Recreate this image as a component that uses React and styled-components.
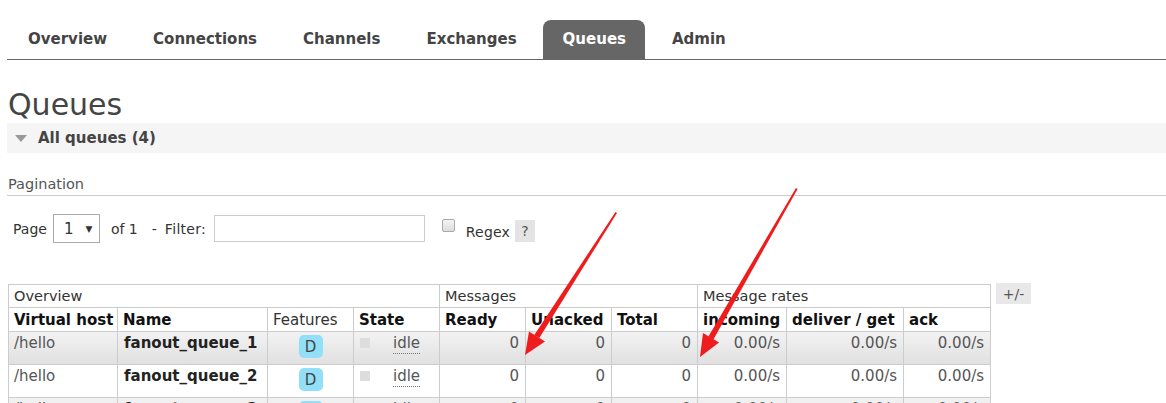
import React from "react";
import styled, { createGlobalStyle } from "styled-components";

const GlobalStyle = createGlobalStyle`
  html, body {
    margin: 0;
    padding: 0;
    background: #fff;
  }
  body {
    font-family: "DejaVu Sans", Verdana, sans-serif;
    color: #444;
    width: 1166px;
    overflow: hidden;
  }
`;

const tabs = ["Overview", "Connections", "Channels", "Exchanges", "Queues", "Admin"];

const columns = [
  { label: "Virtual host", width: 109 },
  { label: "Name", width: 150 },
  { label: "Features", width: 86, light: true },
  { label: "State", width: 86 },
  { label: "Ready", width: 86 },
  { label: "Unacked", width: 86 },
  { label: "Total", width: 86 },
  { label: "incoming", width: 89 },
  { label: "deliver / get", width: 117 },
  { label: "ack", width: 87 },
];

const queues = [
  { vhost: "/hello", name: "fanout_queue_1" },
  { vhost: "/hello", name: "fanout_queue_2" },
  { vhost: "/hello", name: "fanout_queue_3" },
];

const App = () => {
  return (
    <Page>
      <GlobalStyle />
      <TabBar>
        {tabs.map((t) => (
          <Tab key={t} active={t === "Queues"}>
            {t}
          </Tab>
        ))}
      </TabBar>

      <Main>
        <Title>Queues</Title>
        <SectionHeader>
          <Triangle />
          All queues (4)
        </SectionHeader>

        <SubHeading>Pagination</SubHeading>
        <FilterRow>
          <Label>Page</Label>
          <SelectBox>
            1<SelectArrow>▼</SelectArrow>
          </SelectBox>
          <OfLabel>of 1</OfLabel>
          <FilterLabel>- Filter:</FilterLabel>
          <FilterInput />
          <Checkbox type="checkbox" />
          <RegexLabel>Regex</RegexLabel>
          <Help>?</Help>
        </FilterRow>

        <TableArea>
          <QueueTable>
            <colgroup>
              {columns.map((c) => (
                <col key={c.label} style={{ width: c.width }} />
              ))}
            </colgroup>
            <thead>
              <tr>
                <GroupCell colSpan={4}>Overview</GroupCell>
                <GroupCell colSpan={3}>Messages</GroupCell>
                <GroupCell colSpan={3}>Message rates</GroupCell>
              </tr>
              <tr>
                {columns.map((c) => (
                  <HeadCell key={c.label} light={c.light}>
                    {c.label}
                  </HeadCell>
                ))}
              </tr>
            </thead>
            <tbody>
              {queues.map((q, i) => (
                <Row key={q.name} alt={i % 2 === 0}>
                  <Cell>{q.vhost}</Cell>
                  <NameCell>{q.name}</NameCell>
                  <Cell center>
                    <Badge>D</Badge>
                  </Cell>
                  <Cell>
                    <StateBox />
                    <Idle>idle</Idle>
                  </Cell>
                  <Cell num>0</Cell>
                  <Cell num>0</Cell>
                  <Cell num>0</Cell>
                  <Cell num>0.00/s</Cell>
                  <Cell num>0.00/s</Cell>
                  <Cell num>0.00/s</Cell>
                </Row>
              ))}
            </tbody>
          </QueueTable>
          <ToggleButton>+/-</ToggleButton>
        </TableArea>
      </Main>

      <Annotations width="1166" height="403" viewBox="0 0 1166 403">
        <polygon points="615.5,212 617,213 539.3,338 534.3,335" fill="#ee1c1c" />
        <polygon points="525,355 529,331.5 545,341.5" fill="#ee1c1c" />
        <polygon points="796,188 797.6,189 713.4,339.4 708.4,336.4" fill="#ee1c1c" />
        <polygon points="700,357 703,333 719,342.5" fill="#ee1c1c" />
      </Annotations>
    </Page>
  );
};

export default App;

const Page = styled.div`
  position: relative;
  height: 403px;
  overflow: hidden;
`;

const TabBar = styled.ul`
  display: flex;
  list-style: none;
  margin: 0 0 0 7px;
  padding: 20px 0 0 1px;
  border-bottom: 1px solid #666;
`;

const Tab = styled.li`
  font-weight: bold;
  font-size: 15px;
  line-height: 19px;
  padding: 10px 19px 10px 20px;
  margin-right: 7px;
  color: ${(p) => (p.active ? "#fff" : "#444")};
  background: ${(p) => (p.active ? "#666" : "transparent")};
  border-radius: 8px 8px 0 0;
`;

const Main = styled.div`
  padding: 0 0 0 7px;
`;

const Title = styled.h1`
  margin: 27px 0 0 1px;
  font-size: 30px;
  line-height: 36px;
  font-weight: normal;
  color: #444;
`;

const SectionHeader = styled.h2`
  display: flex;
  align-items: center;
  margin: 0;
  height: 30px;
  background: #f5f5f5;
  font-size: 15px;
  font-weight: bold;
  color: #444;
`;

const Triangle = styled.span`
  width: 0;
  height: 0;
  margin: 1px 11px 0 8px;
  border-left: 6px solid transparent;
  border-right: 6px solid transparent;
  border-top: 7px solid #999;
`;

const SubHeading = styled.h3`
  margin: 23px 0 0 0;
  padding: 0 0 3px 1px;
  font-size: 14.5px;
  line-height: 16px;
  font-weight: normal;
  color: #555;
  border-bottom: 1px solid #ccc;
`;

const FilterRow = styled.div`
  display: flex;
  align-items: center;
  height: 29px;
  margin-top: 18px;
  padding-left: 6px;
  font-size: 14px;
  color: #333;
`;

const Label = styled.span`
  margin-right: 6px;
`;

const OfLabel = styled.span`
  margin: 0 0 0 11px;
`;

const FilterLabel = styled.span`
  min-width: 56px;
  margin: 0 6px 0 14px;
  word-spacing: 3px;
  letter-spacing: 0.3px;
`;

const SelectBox = styled.div`
  display: flex;
  align-items: center;
  box-sizing: border-box;
  width: 47px;
  height: 29px;
  padding-left: 10px;
  border: 1px solid #aaa;
  font-size: 15px;
  color: #333;
`;

const SelectArrow = styled.span`
  font-size: 9px;
  margin-left: 12px;
`;

const FilterInput = styled.input`
  box-sizing: border-box;
  width: 211px;
  height: 27px;
  margin: 0;
  border: 1px solid #ccc;
  outline: none;
`;

const Checkbox = styled.input`
  appearance: none;
  box-sizing: border-box;
  width: 13px;
  height: 13px;
  margin: -6px 11px 0 17px;
  border: 1px solid #aaa;
  border-radius: 2px;
  background: linear-gradient(#f4f4f4, #ddd);
`;

const RegexLabel = styled.span`
  margin-top: 6px;
  margin-right: 5px;
  letter-spacing: 0.2px;
`;

const Help = styled.span`
  display: inline-flex;
  align-items: center;
  justify-content: center;
  width: 20px;
  height: 22px;
  margin-top: 5px;
  background: #e4e4e4;
  color: #555;
  font-size: 14px;
`;

const TableArea = styled.div`
  display: flex;
  align-items: flex-start;
  margin-top: 41px;
  padding-left: 1px;
`;

const QueueTable = styled.table`
  width: 982px;
  table-layout: fixed;
  border-collapse: collapse;
  color: #555;
`;

const GroupCell = styled.th`
  height: 22px;
  padding: 0 5px;
  border: 1px solid #ccc;
  text-align: left;
  font-size: 14.5px;
  font-weight: normal;
  color: #333;
  line-height: 20px;
`;

const HeadCell = styled.th`
  height: 23px;
  padding: 0 5px;
  border: 1px solid #ccc;
  border-top: none;
  text-align: left;
  font-size: 15px;
  font-weight: ${(p) => (p.light ? "normal" : "bold")};
  color: ${(p) => (p.light ? "#333" : "#111")};
  line-height: 20px;
  white-space: nowrap;
  overflow: hidden;
`;

const Row = styled.tr`
  height: 33px;
  background: ${(p) => (p.alt ? "linear-gradient(#f2f2f2, #e0e0e0)" : "#fff")};
`;

const Cell = styled.td`
  box-sizing: border-box;
  height: 33px;
  padding: 1px ${(p) => (p.num ? "6px" : "5px")} 0 5px;
  vertical-align: top;
  border: 1px solid #ccc;
  border-bottom: none;
  font-size: 15px;
  line-height: 20px;
  color: #555;
  white-space: nowrap;
  text-align: ${(p) => (p.num ? "right" : p.center ? "center" : "left")};
`;

const NameCell = styled(Cell)`
  font-weight: bold;
  color: #222;
  padding-left: 6px;
`;

const Badge = styled.span`
  display: inline-block;
  width: 24px;
  height: 23px;
  margin-top: 2px;
  line-height: 25px;
  border-radius: 5px;
  background: #92dff8;
  color: #444;
  text-align: center;
  font-size: 15px;
`;

const StateBox = styled.span`
  display: inline-block;
  width: 10px;
  height: 10px;
  margin: 5px 23px 0 1px;
  vertical-align: top;
  background: #ddd;
`;

const Idle = styled.abbr`
  text-decoration: none;
  border-bottom: 1px dotted #777;
  line-height: 19px;
  display: inline-block;
`;

const ToggleButton = styled.span`
  display: inline-flex;
  align-items: center;
  justify-content: center;
  width: 35px;
  height: 21px;
  margin: -1px 0 0 5px;
  background: #e8e8e8;
  color: #555;
  font-size: 14px;
`;

const Annotations = styled.svg`
  position: absolute;
  left: 0;
  top: 0;
  pointer-events: none;
`;
